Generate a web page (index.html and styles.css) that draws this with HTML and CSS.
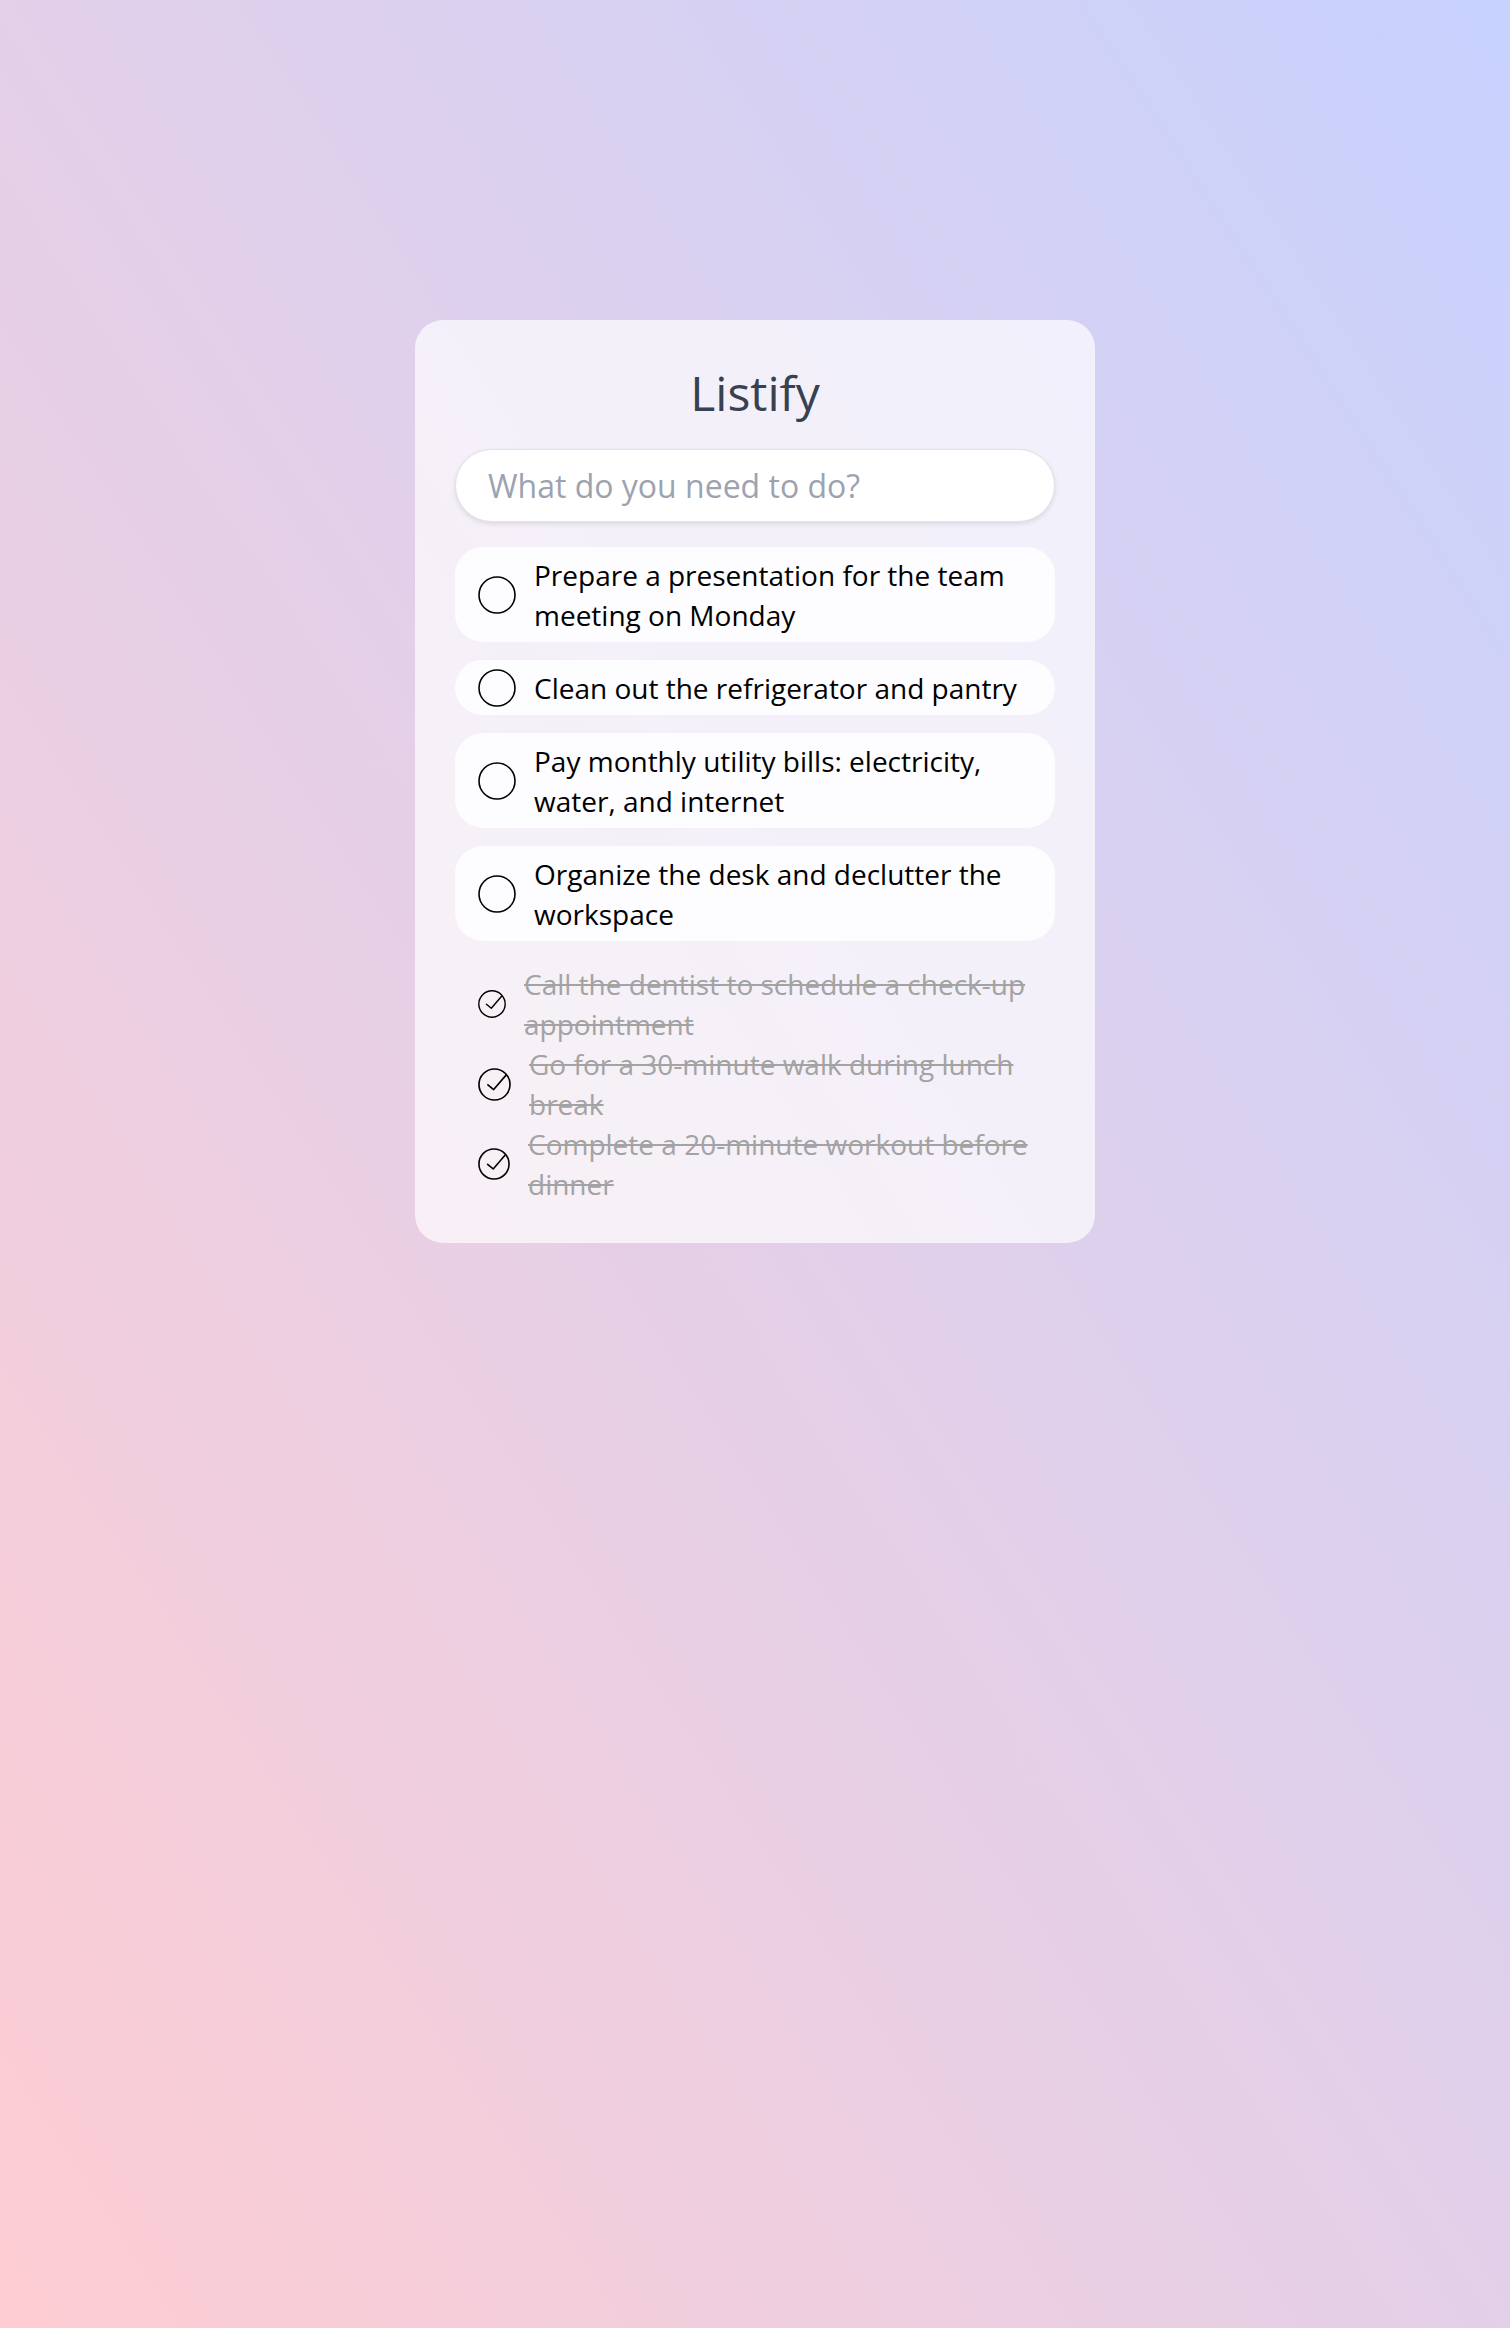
FILE: index.html
```html
<!DOCTYPE html>
<html lang="en">
<head>
<meta charset="utf-8">
<title>Listify</title>
<link rel="stylesheet" href="styles.css">
</head>
<body>
<main class="page">
  <section class="card">
    <h1 class="title">Listify</h1>
    <input class="new-task" type="text" placeholder="What do you need to do?">
    <ul class="tasks">
      <li class="task">
        <svg class="circle" viewBox="0 0 38 38"><circle cx="19" cy="19" r="18" fill="none" stroke="#000" stroke-width="1.6"/></svg>
        <span class="task-text">Prepare a presentation for the team meeting on Monday</span>
      </li>
      <li class="task">
        <svg class="circle" viewBox="0 0 38 38"><circle cx="19" cy="19" r="18" fill="none" stroke="#000" stroke-width="1.6"/></svg>
        <span class="task-text">Clean out the refrigerator and pantry</span>
      </li>
      <li class="task">
        <svg class="circle" viewBox="0 0 38 38"><circle cx="19" cy="19" r="18" fill="none" stroke="#000" stroke-width="1.6"/></svg>
        <span class="task-text">Pay monthly utility bills: electricity, water, and internet</span>
      </li>
      <li class="task">
        <svg class="circle" viewBox="0 0 38 38"><circle cx="19" cy="19" r="18" fill="none" stroke="#000" stroke-width="1.6"/></svg>
        <span class="task-text">Organize the desk and declutter the workspace</span>
      </li>
    </ul>
    <ul class="done-list">
      <li class="done">
        <svg class="check check-s" viewBox="0 0 24 24"><circle cx="12" cy="12" r="11.3" fill="none" stroke="#000" stroke-width="1.2"/><polyline points="7.2,12.2 11.4,15.7 20.4,5.2" fill="none" stroke="#000" stroke-width="1.2" stroke-linecap="round" stroke-linejoin="round"/></svg>
        <span class="done-text">Call the dentist to schedule a check-up appointment</span>
      </li>
      <li class="done">
        <svg class="check check-l" viewBox="0 0 24 24"><circle cx="12" cy="12" r="11.3" fill="none" stroke="#000" stroke-width="1.2"/><polyline points="7.2,12.2 11.4,15.7 20.4,5.2" fill="none" stroke="#000" stroke-width="1.2" stroke-linecap="round" stroke-linejoin="round"/></svg>
        <span class="done-text">Go for a 30-minute walk during lunch break</span>
      </li>
      <li class="done">
        <svg class="check check-m" viewBox="0 0 24 24"><circle cx="12" cy="12" r="11.3" fill="none" stroke="#000" stroke-width="1.2"/><polyline points="7.2,12.2 11.4,15.7 20.4,5.2" fill="none" stroke="#000" stroke-width="1.2" stroke-linecap="round" stroke-linejoin="round"/></svg>
        <span class="done-text">Complete a 20-minute workout before dinner</span>
      </li>
    </ul>
  </section>
</main>
</body>
</html>
```

FILE: styles.css
```css
* { box-sizing: border-box; }

html, body {
  margin: 0;
  padding: 0;
}

body {
  min-height: 2328px;
  font-family: "Open Sans", "Noto Sans", "Liberation Sans", sans-serif;
  background: linear-gradient(to top right, #fecdd3, #c7d2fe);
}

.page {
  display: flex;
  justify-content: center;
  padding-top: 320px;
}

.card {
  width: 680px;
  padding: 40px 40px 39px;
  border-radius: 28px;
  background: rgba(255, 255, 255, 0.68);
  display: flex;
  flex-direction: column;
}

.title {
  margin: 0 0 24px;
  text-align: center;
  font-size: 48px;
  font-weight: 400;
  color: #374151;
}

.new-task {
  width: 100%;
  height: 73px;
  padding: 0 32px;
  border: 1.5px solid #e2e2e8;
  border-radius: 37px;
  background: #fff;
  box-shadow: 0 2px 5px rgba(0, 0, 0, 0.1);
  font-family: inherit;
  font-size: 32px;
  color: #111;
  outline: none;
}

.new-task::placeholder {
  color: #9ca3af;
}

.tasks, .done-list {
  list-style: none;
  margin: 0;
  padding: 0;
  display: flex;
  flex-direction: column;
}

.tasks {
  margin-top: 25px;
  gap: 18px;
}

.task {
  display: flex;
  align-items: center;
  gap: 18px;
  padding: 7.5px 24px 7.5px 23px;
  border-radius: 28px;
  background: rgba(255, 255, 255, 0.8);
}

.circle {
  flex: none;
  width: 38px;
  height: 38px;
}

.task-text {
  font-size: 28px;
  line-height: 40px;
  color: #000;
}

.done-list {
  margin-top: 23px;
}

.done {
  display: flex;
  align-items: center;
  gap: 18px;
  padding: 0 22px 0 23px;
}

.check { flex: none; }
.check-s { width: 28px; height: 28px; }
.check-m { width: 32px; height: 32px; }
.check-l { width: 33px; height: 33px; }

.done-text {
  font-size: 28px;
  line-height: 40px;
  color: #a3a3a3;
  text-decoration: line-through;
  text-decoration-color: #a3a3a3;
}
```
